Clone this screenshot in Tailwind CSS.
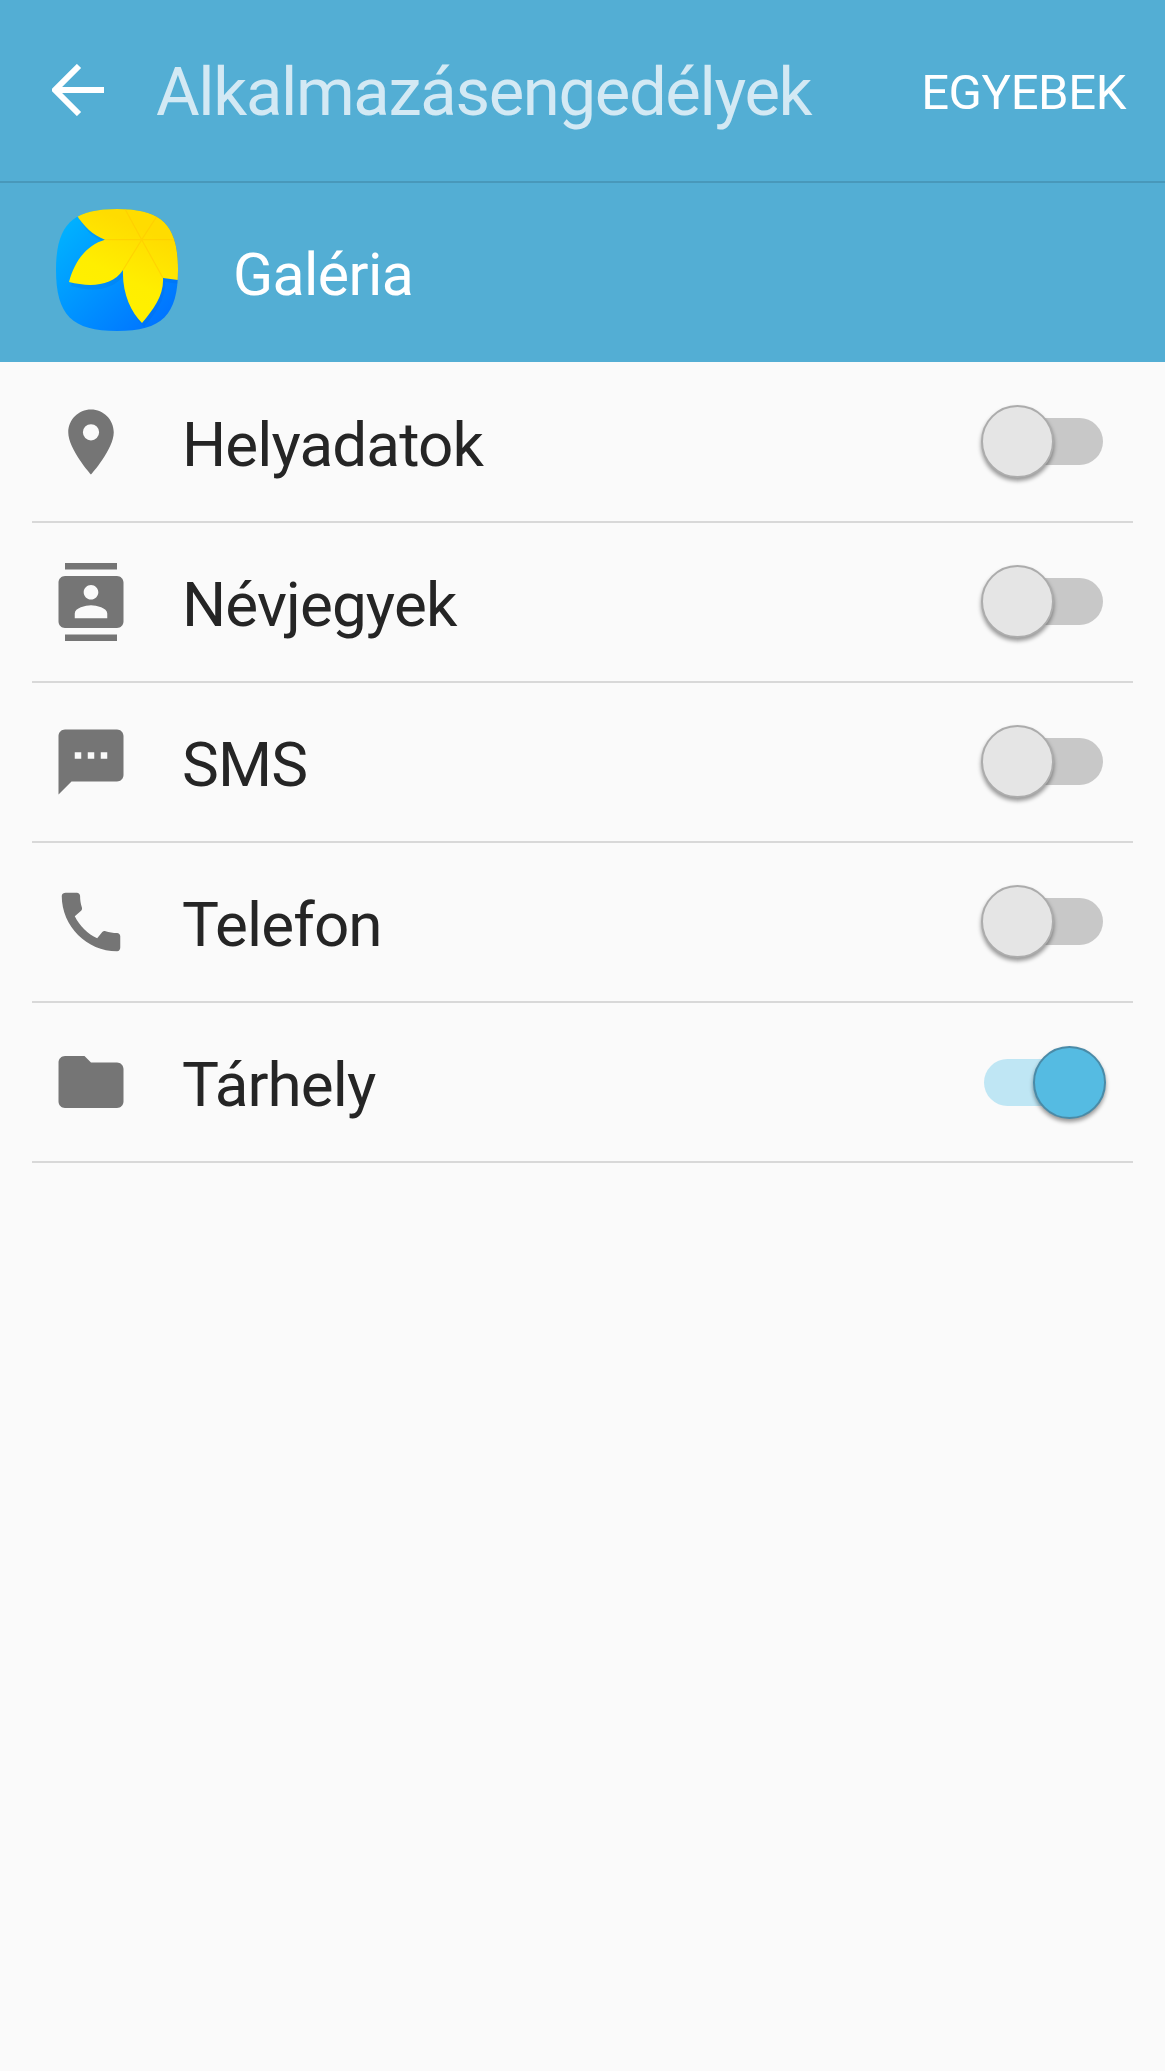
<!DOCTYPE html>
<html lang="hu">
  <head>
    <meta charset="UTF-8" />
    <meta name="viewport" content="width=device-width, initial-scale=1.0" />
    <title>Alkalmazásengedélyek</title>
    <script src="https://cdn.jsdelivr.net/npm/@tailwindcss/browser@4"></script>
  </head>
  <body class="m-0 bg-[#fafafa] font-['Roboto',sans-serif]">
    <main class="w-[1165px] h-[2071px] overflow-hidden bg-[#fafafa]">
      <!-- Top bar -->
      <header class="h-[183px] flex items-center bg-[#53aed4] border-b-2 border-[#4898ba] pl-[52px] pr-[39px]">
        <svg class="w-[54px] h-[52px] shrink-0 -mt-[2px]" viewBox="0 0 54 52" fill="none" stroke="#ffffff" stroke-width="6">
          <path d="M52 26H3" />
          <path d="M27 2L3 26l24 24" />
        </svg>
        <h1 class="ml-[50px] flex-1 text-[67px] leading-none font-normal tracking-[-1.35px] text-[#d3e9f4] whitespace-nowrap mt-[4px]">Alkalmazásengedélyek</h1>
        <span class="text-[49px] leading-none font-normal tracking-[-0.4px] text-white mt-[3px]">EGYEBEK</span>
      </header>

      <!-- App row -->
      <section class="h-[179px] flex items-center bg-[#53aed4] pl-[56px]">
        <svg class="w-[122px] h-[122px] shrink-0 -mt-[5px]" viewBox="0 0 122 122">
          <defs>
            <linearGradient id="iconBlue" x1="0" y1="0" x2="1" y2="1">
              <stop offset="0" stop-color="#00b9ff" />
              <stop offset="1" stop-color="#006cff" />
            </linearGradient>
            <linearGradient id="iconYellow" x1="0.7" y1="0.2" x2="0.4" y2="0.9">
              <stop offset="0" stop-color="#ffdc00" />
              <stop offset="0.6" stop-color="#ffee00" />
              <stop offset="1" stop-color="#fff000" />
            </linearGradient>
            <clipPath id="iconShape">
              <path d="M61 0C106 0 122 16 122 61C122 106 106 122 61 122C16 122 0 106 0 61C0 16 16 0 61 0Z" />
            </clipPath>
          </defs>
          <g clip-path="url(#iconShape)">
            <rect width="122" height="122" fill="url(#iconBlue)" />
            <path d="M13 73C30 78 54 80 67 61C66 85 75 103 86 114C98 100 108 85 107 69L122 71V0H18C26 17 36 26 49 30C30 36 18 52 13 73Z" fill="#0050c0" opacity="0.12" transform="translate(2 4)" />
            <path d="M20 5C28 18 37 26 49 30.7C31 36 19 51 13 73C33 78 56 78 67 61C66 84 75 103 86 114C98 100 108 86 107 69L122 71V-2H17Z" fill="url(#iconYellow)" />
            <path d="M49 30.7H122M85.7 30.7L67 61M85.7 30.7L107 69M85.7 30.7L69 0M85.7 30.7L103 4" stroke="#ffc800" stroke-width="1.2" opacity="0.6" fill="none" />
          </g>
        </svg>
        <span class="ml-[55px] text-[59px] leading-none font-normal tracking-[-0.6px] text-white mt-[4px]">Galéria</span>
      </section>

      <!-- Permission list -->
      <ul class="mx-[32px] pt-px">
        <li class="h-[160px] flex items-center border-b-2 border-[#d8d8d8] pl-[19.5px] pr-[27px]">
          <svg class="w-[78px] h-[78px] shrink-0" viewBox="0 0 24 24" fill="#757575"><path fill-rule="evenodd" d="M12 2C8.13 2 5 5.13 5 9c0 5.25 7 13 7 13s7-7.75 7-13c0-3.87-3.13-7-7-7zm0 9.5a2.5 2.5 0 1 1 0-5 2.5 2.5 0 0 1 0 5z" /></svg>
          <span class="ml-[52.5px] flex-1 text-[62px] leading-none font-normal tracking-[-0.9px] text-[#252525] mt-[5px]">Helyadatok</span>
          <div class="relative w-[125px] h-[73px] -mt-[1px]">
            <div class="absolute left-[3px] right-[3px] top-[13px] h-[47px] rounded-full bg-[#c8c8c8]"></div>
            <div class="absolute left-0 top-0 w-[73px] h-[73px] rounded-full bg-[#e5e5e5] border-2 border-[#acacac] shadow-[0_3px_4px_rgba(0,0,0,0.4)]"></div>
          </div>
        </li>
        <li class="h-[160px] flex items-center border-b-2 border-[#d8d8d8] pl-[19.5px] pr-[27px]">
          <svg class="w-[78px] h-[78px] shrink-0" viewBox="0 0 24 24" fill="#757575"><path d="M20 0H4v2h16V0zM4 24h16v-2H4v2zM20 4H4c-1.1 0-2 .9-2 2v12c0 1.1.9 2 2 2h16c1.1 0 2-.9 2-2V6c0-1.1-.9-2-2-2zm-8 2.75c1.24 0 2.25 1.01 2.25 2.25s-1.01 2.25-2.25 2.25S9.75 10.24 9.75 9 10.76 6.75 12 6.75zM17 17H7v-1.5c0-1.67 3.33-2.5 5-2.5s5 .83 5 2.5V17z" /></svg>
          <span class="ml-[52.5px] flex-1 text-[62px] leading-none font-normal tracking-[-0.9px] text-[#252525] mt-[5px]">Névjegyek</span>
          <div class="relative w-[125px] h-[73px] -mt-[1px]">
            <div class="absolute left-[3px] right-[3px] top-[13px] h-[47px] rounded-full bg-[#c8c8c8]"></div>
            <div class="absolute left-0 top-0 w-[73px] h-[73px] rounded-full bg-[#e5e5e5] border-2 border-[#acacac] shadow-[0_3px_4px_rgba(0,0,0,0.4)]"></div>
          </div>
        </li>
        <li class="h-[160px] flex items-center border-b-2 border-[#d8d8d8] pl-[19.5px] pr-[27px]">
          <svg class="w-[78px] h-[78px] shrink-0" viewBox="0 0 24 24" fill="#757575"><path d="M20 2H4c-1.1 0-2 .9-2 2v18l4-4h14c1.1 0 2-.9 2-2V4c0-1.1-.9-2-2-2zM9 11H7V9h2v2zm4 0h-2V9h2v2zm4 0h-2V9h2v2z" /></svg>
          <span class="ml-[52.5px] flex-1 text-[62px] leading-none font-normal tracking-[-0.9px] text-[#252525] mt-[5px]">SMS</span>
          <div class="relative w-[125px] h-[73px] -mt-[1px]">
            <div class="absolute left-[3px] right-[3px] top-[13px] h-[47px] rounded-full bg-[#c8c8c8]"></div>
            <div class="absolute left-0 top-0 w-[73px] h-[73px] rounded-full bg-[#e5e5e5] border-2 border-[#acacac] shadow-[0_3px_4px_rgba(0,0,0,0.4)]"></div>
          </div>
        </li>
        <li class="h-[160px] flex items-center border-b-2 border-[#d8d8d8] pl-[19.5px] pr-[27px]">
          <svg class="w-[78px] h-[78px] shrink-0" viewBox="0 0 24 24" fill="#757575"><path d="M20.01 15.38c-1.23 0-2.42-.2-3.53-.56-.35-.12-.74-.03-1.01.24l-1.57 1.97c-2.83-1.35-5.48-3.9-6.89-6.83l1.95-1.66c.27-.28.35-.67.24-1.02-.37-1.11-.56-2.3-.56-3.53 0-.54-.45-.99-.99-.99H4.19C3.65 3 3 3.24 3 3.99 3 13.28 10.73 21 20.01 21c.71 0 .99-.63.99-1.18v-3.45c0-.54-.45-.99-.99-.99z" /></svg>
          <span class="ml-[52.5px] flex-1 text-[62px] leading-none font-normal tracking-[-0.9px] text-[#252525] mt-[5px]">Telefon</span>
          <div class="relative w-[125px] h-[73px] -mt-[1px]">
            <div class="absolute left-[3px] right-[3px] top-[13px] h-[47px] rounded-full bg-[#c8c8c8]"></div>
            <div class="absolute left-0 top-0 w-[73px] h-[73px] rounded-full bg-[#e5e5e5] border-2 border-[#acacac] shadow-[0_3px_4px_rgba(0,0,0,0.4)]"></div>
          </div>
        </li>
        <li class="h-[160px] flex items-center border-b-2 border-[#d8d8d8] pl-[19.5px] pr-[27px]">
          <svg class="w-[78px] h-[78px] shrink-0" viewBox="0 0 24 24" fill="#757575"><path d="M10 4H4c-1.1 0-1.99.9-1.99 2L2 18c0 1.1.9 2 2 2h16c1.1 0 2-.9 2-2V8c0-1.1-.9-2-2-2h-8l-2-2z" /></svg>
          <span class="ml-[52.5px] flex-1 text-[62px] leading-none font-normal tracking-[-0.9px] text-[#252525] mt-[5px]">Tárhely</span>
          <div class="relative w-[125px] h-[73px] -mt-[1px]">
            <div class="absolute left-[3px] right-[3px] top-[14px] h-[47px] rounded-full bg-[#bfe6f4]"></div>
            <div class="absolute right-0 top-px w-[73px] h-[73px] rounded-full bg-[#55bbe2] border-2 border-[#4a8ba8] shadow-[0_3px_4px_rgba(0,0,0,0.4)]"></div>
          </div>
        </li>
      </ul>
    </main>
  </body>
</html>
